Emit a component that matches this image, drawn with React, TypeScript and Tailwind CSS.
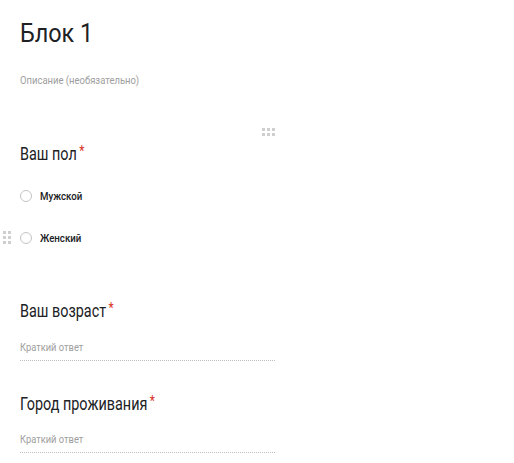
import React from "react";

const font = { fontFamily: "Roboto, 'Noto Sans', sans-serif" };

function Dots({ cols, rows }: { cols: number; rows: number }) {
  return (
    <div
      className="grid gap-[2px]"
      style={{ gridTemplateColumns: `repeat(${cols}, 3px)` }}
    >
      {Array.from({ length: cols * rows }).map((_, i) => (
        <span key={i} className="block h-[3px] w-[3px] bg-[#cfcfcf]" />
      ))}
    </div>
  );
}

function Heading({ text }: { text: string }) {
  return (
    <div className="text-[18px] leading-none text-[#202124]">
      <span className="inline-block origin-left scale-x-[0.8] whitespace-nowrap">
        {text}
        <span className="relative -top-[4px] ml-[3px] text-[15px] text-[#d93025]">*</span>
      </span>
    </div>
  );
}

function ShortAnswer({ className }: { className: string }) {
  return (
    <div className={`w-[255px] border-b border-dotted border-[#bdbdbd] pb-[2px] leading-none ${className}`}>
      <span className="inline-block origin-left scale-x-[0.85] align-top text-[11px] leading-none text-[#9e9e9e]">
        Краткий ответ
      </span>
    </div>
  );
}

function Radio({ label, className, handle }: { label: string; className: string; handle?: boolean }) {
  return (
    <div className={`relative flex h-[12px] items-center ${className}`}>
      {handle && (
        <div className="absolute -left-[17px] top-[-1px]">
          <Dots cols={2} rows={3} />
        </div>
      )}
      <span className="block h-[12px] w-[12px] rounded-full border-[1.5px] border-[#c4c4c4]" />
      <span className="ml-[8px] inline-block origin-left scale-x-[0.88] text-[11px] font-medium leading-none text-[#202124]">
        {label}
      </span>
    </div>
  );
}

export default function App() {
  return (
    <div className="min-h-[463px] w-[514px] bg-white pl-[20px] pt-[20px]" style={font}>
      <div className="text-[26px] leading-none text-[#202124]">
        <span className="inline-block origin-left scale-x-[0.9] align-top">Блок 1</span>
      </div>
      <div className="mt-[29px] text-[11px] leading-none text-[#9e9e9e]">
        <span className="inline-block origin-left scale-x-[0.86] whitespace-nowrap align-top">Описание (необязательно)</span>
      </div>

      <div className="mt-[42px] flex w-[255px] justify-end">
        <Dots cols={3} rows={2} />
      </div>
      <div className="mt-[9px]">
        <Heading text="Ваш пол" />
      </div>
      <Radio label="Мужской" className="mt-[27px]" />
      <Radio label="Женский" className="mt-[30px]" handle />

      <div className="mt-[58px]">
        <Heading text="Ваш возраст" />
      </div>
      <ShortAnswer className="mt-[22px]" />

      <div className="mt-[34px]">
        <Heading text="Город проживания" />
      </div>
      <ShortAnswer className="mt-[21px]" />
    </div>
  );
}
